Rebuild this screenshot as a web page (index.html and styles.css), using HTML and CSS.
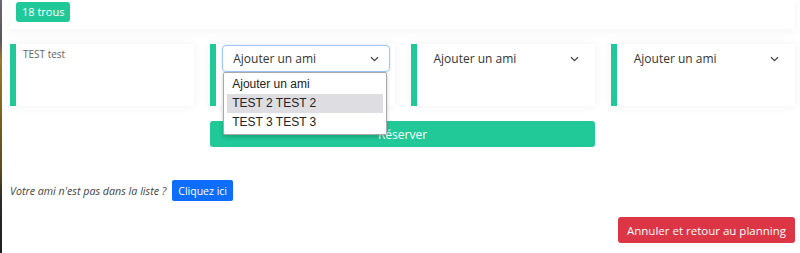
FILE: index.html
```html
<!DOCTYPE html>
<html lang="fr">
<head>
  <meta charset="UTF-8" />
  <meta name="viewport" content="width=device-width, initial-scale=1.0" />
  <title>Réservation</title>
  <link rel="stylesheet" href="styles.css">
</head>
<body>
  <div class="side"></div>
  <div class="main">
    <div class="top-card">
      <span class="badge">18 trous</span>
    </div>

    <div class="players">
      <div class="player">
        <span class="owner">TEST test</span>
      </div>
      <div class="player">
        <div class="select focus">
          <span>Ajouter un ami</span>
          <svg class="chevron" width="9" height="6" viewBox="0 0 9 6"><path d="M1 1.2 L4.5 4.6 L8 1.2" fill="none" stroke="#444" stroke-width="1.2"/></svg>
          <ul class="options">
            <li>Ajouter un ami</li>
            <li class="hover">TEST 2 TEST 2</li>
            <li>TEST 3 TEST 3</li>
          </ul>
        </div>
      </div>
      <div class="player">
        <div class="select">
          <span>Ajouter un ami</span>
          <svg class="chevron" width="9" height="6" viewBox="0 0 9 6"><path d="M1 1.2 L4.5 4.6 L8 1.2" fill="none" stroke="#444" stroke-width="1.2"/></svg>
        </div>
      </div>
      <div class="player">
        <div class="select">
          <span>Ajouter un ami</span>
          <svg class="chevron" width="9" height="6" viewBox="0 0 9 6"><path d="M1 1.2 L4.5 4.6 L8 1.2" fill="none" stroke="#444" stroke-width="1.2"/></svg>
        </div>
      </div>
      <button type="button" class="btn-book">Réserver</button>
    </div>

    <div class="missing">
      <em>Votre ami n'est pas dans la liste ?</em>
      <button type="button" class="btn-blue">Cliquez ici</button>
    </div>

    <div class="actions">
      <button type="button" class="btn-red">Annuler et retour au planning</button>
    </div>
  </div>
</body>
</html>
```

FILE: styles.css
```css
body {
  font-family: "Open Sans", Arial, sans-serif;
  margin: 0;
  padding: 0;
  display: flex;
  height: 253px;
  overflow: hidden;
  background-color: #fff;
  color: #333;
}

.side {
  width: 2px;
  flex-shrink: 0;
  background: linear-gradient(#6d6670 0, #5a5560 40px, #9a7a2a 60px, #7a6020 120px, #5e4a1e 170px, #2c2a2a 200px, #1e1e1e 100%);
}

.main {
  flex: 1;
  padding: 0 5px 0 8px;
}

.top-card {
  display: flex;
  background: white;
  padding: 2px 6px 7px;
  box-shadow: 0 2px 10px rgba(0, 0, 0, 0.05);
}

.badge {
  background-color: #20c997;
  color: white;
  font-size: 11px;
  line-height: 20px;
  padding: 0 6px;
  border-radius: 3px;
}

.players {
  display: grid;
  grid-template-columns: repeat(4, 1fr);
  column-gap: 16px;
  row-gap: 15px;
  margin-top: 15px;
}

.player {
  background: white;
  border-left: 6px solid #20c997;
  height: 61px;
  padding: 1px 5px 0 6px;
  box-shadow: 0 0 10px rgba(0, 0, 0, 0.06);
}

.owner {
  display: block;
  font-size: 10px;
  color: #666;
  padding: 2px 0 0 1px;
}

.select {
  position: relative;
  display: flex;
  align-items: center;
  justify-content: space-between;
  height: 25px;
  padding: 0 10px;
  border: 1px solid transparent;
  border-radius: 4px;
  font-size: 12px;
  color: #333;
}

.select.focus {
  border-color: #9ec5fe;
  box-shadow: 0 0 0 1px rgba(13, 110, 253, 0.08);
}

.options {
  position: absolute;
  top: 26px;
  left: 0;
  width: 162px;
  margin: 0;
  padding: 2px 0;
  list-style: none;
  background: white;
  border: 1px solid #a9a9a9;
  border-radius: 2px;
  box-shadow: 0 2px 4px rgba(0, 0, 0, 0.2);
  font-family: "Liberation Sans", Arial, sans-serif;
  font-size: 12px;
  color: #222;
}

.options li {
  height: 19px;
  line-height: 19px;
  margin: 0 3px;
  padding: 0 5px;
}

.options li.hover {
  background-color: #dddde2;
}

.btn-book {
  grid-column: 2 / 4;
  height: 26px;
  border: none;
  border-radius: 3px;
  background-color: #20c997;
  color: white;
  font-family: inherit;
  font-size: 12px;
}

.missing {
  display: flex;
  align-items: center;
  gap: 6px;
  margin-top: 33px;
  font-size: 10.7px;
  color: #444;
}

.btn-blue {
  height: 21px;
  padding: 0 6px;
  border: none;
  border-radius: 2px;
  background-color: #0d6efd;
  color: white;
  font-family: inherit;
  font-size: 10.5px;
}

.actions {
  display: flex;
  justify-content: flex-end;
  margin-top: 16px;
}

.btn-red {
  height: 26px;
  padding: 0 9px;
  border: none;
  border-radius: 3px;
  background-color: #dc3545;
  color: white;
  font-family: inherit;
  font-size: 11.5px;
}
```
